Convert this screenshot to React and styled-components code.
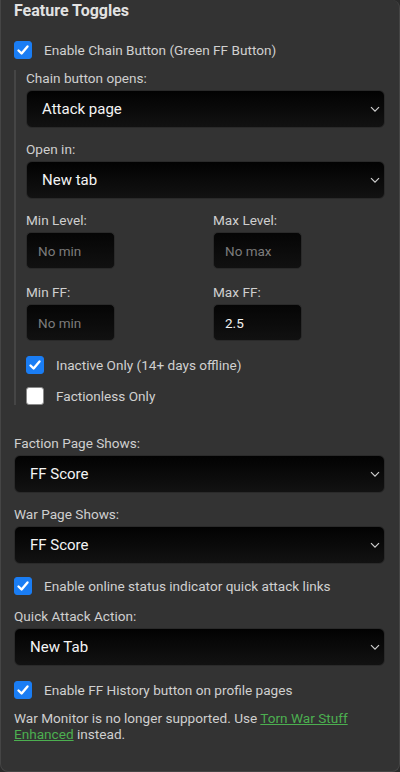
import React from "react";
import styled, { createGlobalStyle } from "styled-components";

const Global = createGlobalStyle`
  html, body { margin: 0; padding: 0; background: #2b2b2b; }
  body { font-family: Roboto, "Noto Sans", Arial, sans-serif; }
  * { box-sizing: border-box; }
`;

const Panel = styled.div`
  width: 400px;
  height: 772px;
  background: #333333;
  border: 1px solid #454545;
  border-top: none;
  border-radius: 0 8px 8px 8px;
  padding: 0 14px 0 13px;
  color: #d2d2d2;
  overflow: hidden;
`;

const Heading = styled.h3`
  margin: 0;
  padding-top: 1px;
  font-size: 16px;
  font-weight: 700;
  line-height: 19px;
  color: #e2e2e2;
`;

const CheckRow = styled.label`
  display: flex;
  align-items: center;
  gap: 12px;
  margin-top: ${(p) => p.$mt || 0}px;
  font-size: 13.6px;
  line-height: 18px;
  color: #d0d0d0;
`;

const Box = styled.span`
  width: 18px;
  height: 18px;
  flex: none;
  border-radius: 3px;
  background: ${(p) => (p.$checked ? "#1a7df4" : "#ffffff")};
  border: 1px solid ${(p) => (p.$checked ? "#1a7df4" : "#8a8a8a")};
  display: flex;
  align-items: center;
  justify-content: center;
`;

const Nested = styled.div`
  margin-top: 11px;
  border-left: 2px solid #454545;
  padding-left: 10px;
`;

const Label = styled.div`
  font-size: 13.6px;
  line-height: 17px;
  color: #cfcfcf;
  margin-top: ${(p) => p.$mt || 0}px;
  margin-bottom: 3px;
`;

const SelectWrap = styled.div`
  position: relative;
  height: 38px;
  border-radius: 6px;
  border: 1px solid #2a2a2a;
  background: linear-gradient(180deg, #020202 0%, #121212 100%);
  display: flex;
  align-items: center;
  padding-left: 15px;
  font-size: 15px;
  color: #f4f4f4;
`;

const Chevron = styled.svg`
  position: absolute;
  right: 4px;
  top: 50%;
  margin-top: -3px;
`;

const Grid = styled.div`
  display: grid;
  grid-template-columns: 1fr 1fr;
  column-gap: 15px;
  margin-top: ${(p) => p.$mt || 0}px;
`;

const Field = styled.div`
  display: flex;
  flex-direction: column;
`;

const Input = styled.input`
  width: 89px;
  height: 37px;
  border-radius: 5px;
  border: 1px solid #2a2a2a;
  background: linear-gradient(180deg, #050505 0%, #111111 100%);
  color: #f2f2f2;
  font-family: inherit;
  font-size: 13.5px;
  padding: 0 0 0 11px;
  outline: none;
  &::placeholder { color: #7c7c7c; }
`;

const Note = styled.p`
  margin: 11px 0 0;
  font-size: 13.6px;
  line-height: 16px;
  color: #cfcfcf;
`;

const Link = styled.a`
  color: #4caf50;
  text-decoration: underline;
`;

const Check = ({ checked }) => (
  <Box $checked={checked}>
    {checked && (
      <svg width="14" height="14" viewBox="0 0 14 14">
        <path d="M2.5 7.5 L5.6 10.5 L11.5 3.5" fill="none" stroke="#fff" strokeWidth="2.4" strokeLinecap="round" strokeLinejoin="round" />
      </svg>
    )}
  </Box>
);

const Select = ({ value }) => (
  <SelectWrap>
    {value}
    <Chevron width="10" height="7" viewBox="0 0 10 7">
      <path d="M1 1.2 L5 5.2 L9 1.2" fill="none" stroke="#cfcfcf" strokeWidth="1.2" />
    </Chevron>
  </SelectWrap>
);

export default function App() {
  return (
    <>
      <Global />
      <Panel>
        <Heading>Feature Toggles</Heading>
        <CheckRow $mt={21}>
          <Check checked />
          Enable Chain Button (Green FF Button)
        </CheckRow>
        <Nested>
          <Label>Chain button opens:</Label>
          <Select value="Attack page" />
          <Label $mt={13}>Open in:</Label>
          <Select value="New tab" />
          <Grid $mt={13}>
            <Field>
              <Label>Min Level:</Label>
              <Input placeholder="No min" />
            </Field>
            <Field>
              <Label>Max Level:</Label>
              <Input placeholder="No max" />
            </Field>
          </Grid>
          <Grid $mt={15}>
            <Field>
              <Label>Min FF:</Label>
              <Input placeholder="No min" />
            </Field>
            <Field>
              <Label>Max FF:</Label>
              <Input defaultValue="2.5" />
            </Field>
          </Grid>
          <CheckRow $mt={15}>
            <Check checked />
            Inactive Only (14+ days offline)
          </CheckRow>
          <CheckRow $mt={13}>
            <Check />
            Factionless Only
          </CheckRow>
        </Nested>
        <Label $mt={30}>Faction Page Shows:</Label>
        <Select value="FF Score" />
        <Label $mt={13}>War Page Shows:</Label>
        <Select value="FF Score" />
        <CheckRow $mt={13}>
          <Check checked />
          Enable online status indicator quick attack links
        </CheckRow>
        <Label $mt={13}>Quick Attack Action:</Label>
        <Select value="New Tab" />
        <CheckRow $mt={15}>
          <Check checked />
          Enable FF History button on profile pages
        </CheckRow>
        <Note>
          War Monitor is no longer supported. Use <Link href="#">Torn War Stuff Enhanced</Link> instead.
        </Note>
      </Panel>
    </>
  );
}
